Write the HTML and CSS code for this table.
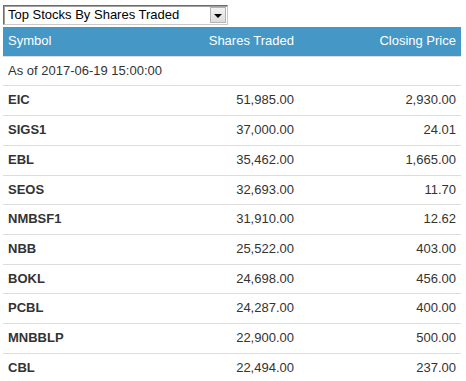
FILE: index.html
```html
<!DOCTYPE html>
<html>
<head>
<meta charset="utf-8">
<link rel="stylesheet" href="styles.css">
</head>
<body>
<div class="page">
  <div class="select">
    <span class="select-text">Top Stocks By Shares Traded</span>
    <span class="select-btn"><span class="arrow"></span></span>
  </div>
  <table class="stocks">
    <colgroup>
      <col class="c1"><col class="c2"><col class="c3">
    </colgroup>
    <thead>
      <tr><th class="left">Symbol</th><th class="right">Shares Traded</th><th class="right">Closing Price</th></tr>
    </thead>
    <tbody>
      <tr><td class="left" colspan="3">As of 2017-06-19 15:00:00</td></tr>
      <tr><td class="sym">EIC</td><td class="right">51,985.00</td><td class="right">2,930.00</td></tr>
      <tr><td class="sym">SIGS1</td><td class="right">37,000.00</td><td class="right">24.01</td></tr>
      <tr><td class="sym">EBL</td><td class="right">35,462.00</td><td class="right">1,665.00</td></tr>
      <tr><td class="sym">SEOS</td><td class="right">32,693.00</td><td class="right">11.70</td></tr>
      <tr><td class="sym">NMBSF1</td><td class="right">31,910.00</td><td class="right">12.62</td></tr>
      <tr><td class="sym">NBB</td><td class="right">25,522.00</td><td class="right">403.00</td></tr>
      <tr><td class="sym">BOKL</td><td class="right">24,698.00</td><td class="right">456.00</td></tr>
      <tr><td class="sym">PCBL</td><td class="right">24,287.00</td><td class="right">400.00</td></tr>
      <tr><td class="sym">MNBBLP</td><td class="right">22,900.00</td><td class="right">500.00</td></tr>
      <tr><td class="sym">CBL</td><td class="right">22,494.00</td><td class="right">237.00</td></tr>
    </tbody>
  </table>
</div>
</body>
</html>
```
FILE: styles.css
```css
html, body {
  margin: 0;
  padding: 0;
  background: #fff;
}
body {
  font-family: "Liberation Sans", Arial, sans-serif;
  font-size: 13px;
  color: #333;
}
.page {
  padding: 5px 0 0 3px;
}
.select {
  box-sizing: border-box;
  width: 225px;
  height: 20px;
  border-style: solid;
  border-width: 1px;
  border-color: #6d6d6d #c8c8c8 #c8c8c8 #6d6d6d;
  box-shadow: inset 1px 1px 0 #a0a0a0;
  display: flex;
  align-items: center;
  justify-content: space-between;
  padding: 1px 1px 1px 4px;
  background: #fff;
  color: #000;
}
.select-text {
  font-size: 13px;
  line-height: 16px;
}
.select-btn {
  box-sizing: border-box;
  width: 16px;
  height: 16px;
  background: linear-gradient(#f2f2f2, #dcdcdc);
  border: 1px solid #b4b4b4;
  display: flex;
  align-items: center;
  justify-content: center;
}
.arrow {
  width: 0;
  height: 0;
  border-left: 4px solid transparent;
  border-right: 4px solid transparent;
  border-top: 4px solid #000;
  margin-top: 1px;
}
.stocks {
  margin-top: 2px;
  width: 458px;
  border-collapse: collapse;
  table-layout: fixed;
}
.c1 { width: 146px; }
.c2 { width: 150px; }
.c3 { width: 162px; }
.stocks th {
  background: #4597c6;
  color: #fff;
  font-weight: normal;
  padding: 5px;
  line-height: 18.7px;
}
.stocks td {
  padding: 5px;
  line-height: 18.7px;
  border-top: 1px solid #dddddd;
  white-space: nowrap;
}
.left { text-align: left; }
.right { text-align: right; }
.sym { font-weight: bold; text-align: left; }
```
